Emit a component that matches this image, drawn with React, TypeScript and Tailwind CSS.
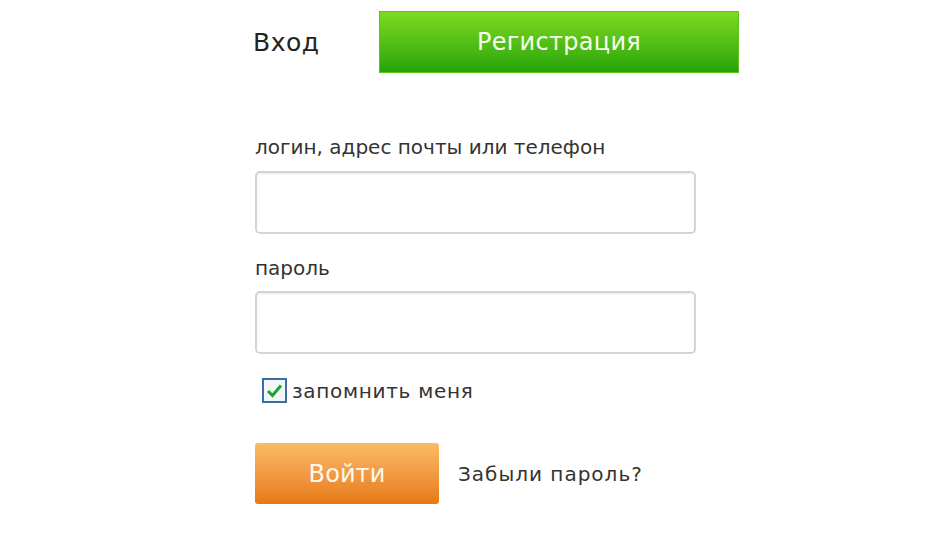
import React from 'react';

const font = { fontFamily: '"DejaVu Sans", Verdana, sans-serif' };

export default function App() {
  return (
    <div className="w-[950px] h-[540px] bg-white" style={font}>
      <div className="ml-[253px] w-[486px] pt-[11px]">
        {/* Tabs */}
        <div className="flex items-center">
          <div className="w-[126px] text-[25px] text-[#222] leading-none tracking-[0.5px]">Вход</div>
          <button className="w-[360px] h-[62px] bg-gradient-to-b from-[#7ddb21] to-[#22a40a] text-[#f4fff0] text-[24px] tracking-[0.3px] border border-[#5fc21a]">
            Регистрация
          </button>
        </div>

        {/* Form */}
        <div className="pl-[2px] pt-[64px]">
          <div className="text-[20px] text-[#333] leading-none">логин, адрес почты или телефон</div>
          <input className="block mt-[14px] w-[441px] h-[63px] rounded-[5px] border-2 border-[#d4d4d4] shadow-[inset_0_1px_2px_rgba(0,0,0,0.08)] outline-none" />

          <div className="mt-[24px] text-[20px] text-[#333] leading-none">пароль</div>
          <input type="password" className="block mt-[13px] w-[441px] h-[63px] rounded-[5px] border-2 border-[#d4d4d4] shadow-[inset_0_1px_2px_rgba(0,0,0,0.08)] outline-none" />

          <div className="mt-[24px] ml-[7px] flex items-center gap-[5px]">
            <span className="w-[25px] h-[25px] border-2 border-[#3b6e9e] bg-[#f4f7fa] flex items-center justify-center">
              <svg width="17" height="15" viewBox="0 0 17 15">
                <path d="M2 8 L6.5 12.5 L15 2.5" fill="none" stroke="#19a829" strokeWidth="3" />
              </svg>
            </span>
            <span className="text-[20px] text-[#333] leading-none tracking-[0.7px]">запомнить меня</span>
          </div>

          <div className="mt-[40px] flex items-center">
            <button className="w-[184px] h-[61px] rounded-[3px] bg-gradient-to-b from-[#fcbb66] to-[#e57a0e] text-[#fff8ef] text-[24px] tracking-[0.1px]">
              Войти
            </button>
            <span className="ml-[19px] text-[20px] text-[#333] tracking-[1px]">Забыли пароль?</span>
          </div>
        </div>
      </div>
    </div>
  );
}
